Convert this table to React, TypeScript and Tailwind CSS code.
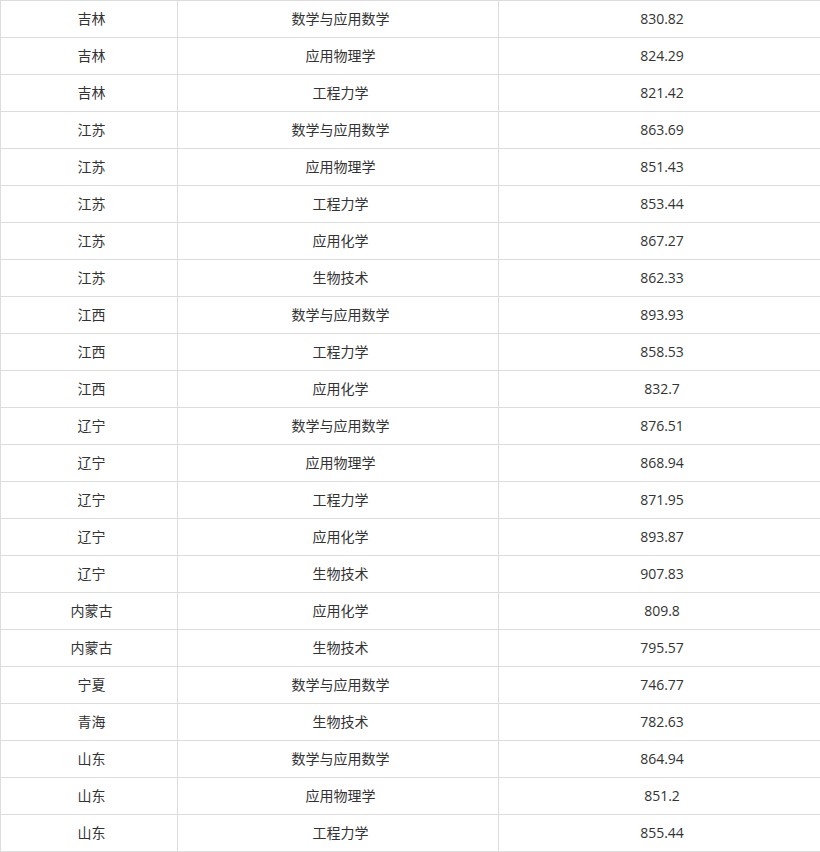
const rows: [string, string, string][] = [
  ["吉林", "数学与应用数学", "830.82"],
  ["吉林", "应用物理学", "824.29"],
  ["吉林", "工程力学", "821.42"],
  ["江苏", "数学与应用数学", "863.69"],
  ["江苏", "应用物理学", "851.43"],
  ["江苏", "工程力学", "853.44"],
  ["江苏", "应用化学", "867.27"],
  ["江苏", "生物技术", "862.33"],
  ["江西", "数学与应用数学", "893.93"],
  ["江西", "工程力学", "858.53"],
  ["江西", "应用化学", "832.7"],
  ["辽宁", "数学与应用数学", "876.51"],
  ["辽宁", "应用物理学", "868.94"],
  ["辽宁", "工程力学", "871.95"],
  ["辽宁", "应用化学", "893.87"],
  ["辽宁", "生物技术", "907.83"],
  ["内蒙古", "应用化学", "809.8"],
  ["内蒙古", "生物技术", "795.57"],
  ["宁夏", "数学与应用数学", "746.77"],
  ["青海", "生物技术", "782.63"],
  ["山东", "数学与应用数学", "864.94"],
  ["山东", "应用物理学", "851.2"],
  ["山东", "工程力学", "855.44"],
];

export default function App() {
  return (
    <div className="min-h-screen bg-white">
      <table
        className="w-[820px] table-fixed border-collapse text-[14px] text-[#333]"
        style={{ fontFamily: '"Open Sans", "Noto Sans CJK SC", sans-serif' }}
      >
        <colgroup>
          <col className="w-[177px]" />
          <col className="w-[321px]" />
          <col className="w-[322px]" />
        </colgroup>
        <tbody>
          {rows.map(([prov, major, score], i) => (
            <tr key={i} className="h-[37px]">
              <td className="border border-[#ddd] py-0 pr-0 pl-[5px] text-center leading-[36px]">{prov}</td>
              <td className="border border-[#ddd] py-0 pr-0 pl-[5px] text-center leading-[36px]">{major}</td>
              <td className="border border-[#ddd] py-0 pr-0 pl-[5px] text-center leading-[36px]">{score}</td>
            </tr>
          ))}
        </tbody>
      </table>
    </div>
  );
}
